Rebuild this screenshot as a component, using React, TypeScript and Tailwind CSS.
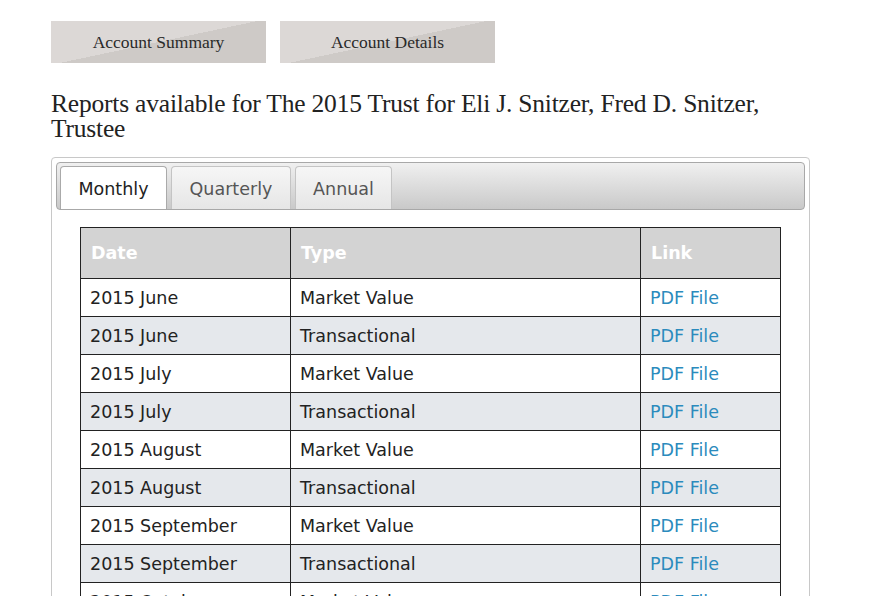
const rows: [string, string][] = [
  ['2015 June', 'Market Value'],
  ['2015 June', 'Transactional'],
  ['2015 July', 'Market Value'],
  ['2015 July', 'Transactional'],
  ['2015 August', 'Market Value'],
  ['2015 August', 'Transactional'],
  ['2015 September', 'Market Value'],
  ['2015 September', 'Transactional'],
  ['2015 October', 'Market Value'],
  ['2015 October', 'Transactional'],
];

export default function App() {
  return (
    <div className="min-h-screen bg-white pl-[51px] pt-[21px] w-[810px]">
      <div className="flex gap-[14px]">
        <button className="w-[215px] h-[42px] pt-[1px] bg-[linear-gradient(168deg,#dcd8d6_50%,#cecac7_50%)] text-[#2a2a2a] text-[17.5px] font-['Liberation_Serif',serif]">
          Account Summary
        </button>
        <button className="w-[215px] h-[42px] pt-[1px] bg-[linear-gradient(168deg,#dcd8d6_50%,#cecac7_50%)] text-[#2a2a2a] text-[17.5px] font-['Liberation_Serif',serif]">
          Account Details
        </button>
      </div>

      <h1 className="mt-[28px] text-[25.5px] leading-[25px] text-[#222] font-['Liberation_Serif',serif] tracking-[-0.2px] pr-[30px]">
        Reports available for The 2015 Trust for Eli J. Snitzer, Fred D. Snitzer, Trustee
      </h1>

      <div className="mt-[16px] border border-[#c8c8c8] rounded-[4px] p-[4px] pb-0 font-['DejaVu_Sans',sans-serif]">
        <div className="h-[48px] border border-[#a8a8a8] rounded-[4px] bg-[linear-gradient(#f0f0f0,#c9c9c9)] flex items-end gap-[4px] pl-[3px]">
          <div className="w-[107px] h-[43px] pt-[3px] bg-white border border-[#aaa] border-b-0 rounded-t-[4px] flex items-center justify-center text-[17.5px] text-[#222]">
            Monthly
          </div>
          <div className="w-[120px] h-[43px] pt-[3px] bg-[linear-gradient(#f6f6f6,#e6e6e6)] border border-[#c4c4c4] border-b-0 rounded-t-[4px] flex items-center justify-center text-[17.5px] text-[#555]">
            Quarterly
          </div>
          <div className="w-[97px] h-[43px] pt-[3px] bg-[linear-gradient(#f6f6f6,#e6e6e6)] border border-[#c4c4c4] border-b-0 rounded-t-[4px] flex items-center justify-center text-[17.5px] text-[#555]">
            Annual
          </div>
        </div>

        <div className="pl-[24px] pt-[17px]">
          <table className="border-collapse w-[701px] text-[17.5px]">
            <thead>
              <tr className="h-[51px] bg-[#d3d3d3] text-white font-bold text-left">
                <th className="w-[210px] border border-[#222] px-[10px] pt-[1px]">Date</th>
                <th className="w-[350px] border border-[#222] px-[10px] pt-[1px]">Type</th>
                <th className="border border-[#222] px-[10px] pt-[1px]">Link</th>
              </tr>
            </thead>
            <tbody>
              {rows.map(([d, t], i) => (
                <tr key={i} className={`h-[38px] ${i % 2 ? 'bg-[#e5e8ec]' : 'bg-white'} text-[#222]`}>
                  <td className="border border-[#222] px-[9px] pt-[1px]">{d}</td>
                  <td className="border border-[#222] px-[9px] pt-[1px]">{t}</td>
                  <td className="border border-[#222] px-[9px] pt-[1px] text-[#2b8bbd]">PDF File</td>
                </tr>
              ))}
            </tbody>
          </table>
        </div>
      </div>
    </div>
  );
}
